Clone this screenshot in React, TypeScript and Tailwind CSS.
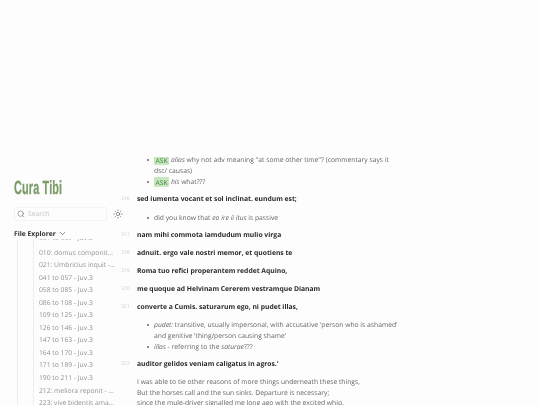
import React from "react";
import { Search, Sun, ChevronDown } from "lucide-react";

const files = [
  "010: domus componit...",
  "021: Umbricius inquit -...",
  "041 to 057 - Juv.3",
  "058 to 085 - Juv.3",
  "086 to 108 - Juv.3",
  "109 to 125 - Juv.3",
  "126 to 146 - Juv.3",
  "147 to 163 - Juv.3",
  "164 to 170 - Juv.3",
  "171 to 189 - Juv.3",
  "190 to 211 - Juv.3",
  "212: meliora reponit - ...",
  "223: vive bidentis ama...",
];

function Line({ n, children }: { n: number; children: React.ReactNode }) {
  return (
    <div className="flex items-start h-[11px] leading-[11px]">
      <span className="w-[16px] shrink-0 -ml-[16px] text-[5px] text-[#c9c9c9] mt-[0.5px]">{n}</span>
      <span className="font-bold text-[#2a2a2a] whitespace-nowrap">{children}</span>
    </div>
  );
}

function Li({ children, cls = "" }: { children: React.ReactNode; cls?: string }) {
  return (
    <li className={`relative leading-[11px] ${cls}`}>
      <span className="absolute -left-[7.5px] top-[4.5px] w-[2px] h-[2px] rounded-full bg-[#666]" />
      {children}
    </li>
  );
}

function Ask() {
  return <span className="bg-[#c5e8bf] text-[#4f7a4a] rounded-[1px] px-[1.5px] py-[0.5px]">ASK</span>;
}

export default function App() {
  return (
    <div className="w-[540px] h-[405px] overflow-hidden bg-[#fdfdfd] flex font-['Open_Sans',sans-serif] text-[6.75px] text-[#666] [text-rendering:geometricPrecision] blur-[0.25px]">
      <aside className="w-[119px] shrink-0 h-full pt-[179px] pl-[14px] flex flex-col z-10">
        <h1 className="font-['Liberation_Sans',sans-serif] font-bold text-[19px] leading-[20px] text-[#7d9b6a] h-[20px] scale-x-[0.57] origin-left whitespace-nowrap tracking-[0.3px] [-webkit-text-stroke:0.3px_#7d9b6a]">Cura Tibi</h1>
        <div className="flex items-center mt-[8px] h-[14px]">
          <div className="w-[93px] shrink-0 h-[14px] border border-[#f3f3f3] rounded-[2px] flex items-center pl-[2px] gap-[3px]">
            <Search size={8} strokeWidth={1.5} className="text-[#555]" />
            <span className="text-[6.75px] text-[#c4c4c4]">Search</span>
          </div>
          <Sun size={10} strokeWidth={1.3} className="ml-[6px] shrink-0 text-[#444]" />
        </div>
        <div className="flex items-center mt-[7px] h-[11px] font-bold text-[#333] leading-[11px] gap-[2px]">
          File Explorer
          <ChevronDown size={9} strokeWidth={1.5} className="text-[#333]" />
        </div>
        <div className="relative overflow-hidden h-[170px]">
          <div className="flex pl-[3px]">
            <div className="w-[16px] shrink-0 border-l border-[#eeeeee]" />
            <div className="border-l border-[#eeeeee] pl-[5px]">
              <div className="h-[12.5px] -mt-[7px] leading-[12.5px] text-[#aaa] whitespace-nowrap">001 to 009 - Juv.3</div>
              <div className="flex flex-col mt-[2px] text-[#939393]">
                {files.map((f) => (
                  <div key={f} className="h-[12.55px] leading-[12.55px] whitespace-nowrap">{f}</div>
                ))}
              </div>
            </div>
          </div>
        </div>
      </aside>

      <main className="flex-1 h-full pt-[157px] overflow-hidden">
        <div className="overflow-hidden h-[248px] pl-[18px]">
          <div className="w-[262px] -mt-[3px]">
            <ul className="pl-[17px]">
              <Li><Ask /> <em>alias</em> why not adv meaning "at some other time"? (commentary says it dsc/ causas)</Li>
              <Li><Ask /> <em>his</em> what???</Li>
            </ul>
            <div className="mt-[6px]"><Line n={316}>sed iumenta vocant et sol inclinat. eundum est;</Line></div>
            <ul className="pl-[17px] mt-[8px]">
              <Li>did you know that <em>eo ire ii itus</em> is passive</Li>
            </ul>
            <div className="mt-[6px]"><Line n={317}>nam mihi commota iamdudum mulio virga</Line></div>
            <div className="mt-[7px]"><Line n={318}>adnuit. ergo vale nostri memor, et quotiens te</Line></div>
            <div className="mt-[7px]"><Line n={319}>Roma tuo refici properantem reddet Aquino,</Line></div>
            <div className="mt-[7px]"><Line n={320}>me quoque ad Helvinam Cererem vestramque Dianam</Line></div>
            <div className="mt-[7px]"><Line n={321}>converte a Cumis. saturarum ego, ni pudet illas,</Line></div>
            <ul className="pl-[17px] mt-[7px]">
              <Li><em>pudet:</em> transitive, usually impersonal, with accusative 'person who is ashamed' and genitive 'thing/person causing shame'</Li>
              <Li><em>illas</em> - referring to the <em>saturae</em>???</Li>
            </ul>
            <div className="mt-[6px]"><Line n={322}>auditor gelidos veniam caligatus in agros.'</Line></div>
            <div className="mt-[8px] leading-[10.7px] whitespace-nowrap">
              <div>I was able to tie other reasons of more things underneath these things,</div>
              <div>But the horses call and the sun sinks. Departure is necessary;</div>
              <div>since the mule-driver signalled me long ago with the excited whip.</div>
            </div>
          </div>
        </div>
      </main>
    </div>
  );
}
